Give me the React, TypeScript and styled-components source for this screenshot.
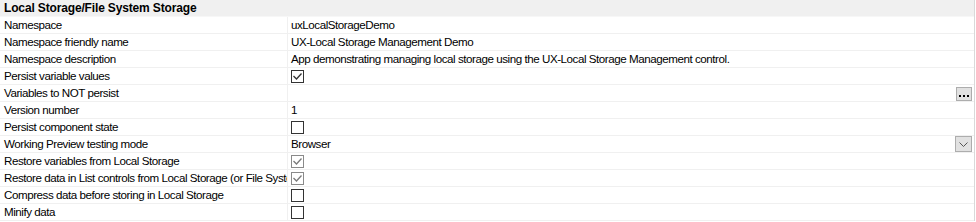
import React from 'react';
import styled, { createGlobalStyle } from 'styled-components';

type Kind = 'text' | 'check' | 'checkDim' | 'box' | 'ellipsis' | 'select';

interface Prop {
    label: string;
    kind: Kind;
    value?: string;
}

const props: Prop[] = [
    { label: 'Namespace', kind: 'text', value: 'uxLocalStorageDemo' },
    { label: 'Namespace friendly name', kind: 'text', value: 'UX-Local Storage Management Demo' },
    { label: 'Namespace description', kind: 'text', value: 'App demonstrating managing local storage using the UX-Local Storage Management control.' },
    { label: 'Persist variable values', kind: 'check' },
    { label: 'Variables to NOT persist', kind: 'ellipsis', value: '' },
    { label: 'Version number', kind: 'text', value: '1' },
    { label: 'Persist component state', kind: 'box' },
    { label: 'Working Preview testing mode', kind: 'select', value: 'Browser' },
    { label: 'Restore variables from Local Storage', kind: 'checkDim' },
    { label: 'Restore data in List controls from Local Storage (or File System Storage)', kind: 'checkDim' },
    { label: 'Compress data before storing in Local Storage', kind: 'box' },
    { label: 'Minify data', kind: 'box' },
];

export default function App() {
    return <>
        <GlobalStyle />
        <Grid>
            <Header>Local Storage/File System Storage</Header>
            {props.map(p => <Row key={p.label}>
                <Label>{p.label}</Label>
                <Value>{renderValue(p)}</Value>
            </Row>)}
        </Grid>
    </>;
}

function renderValue(p: Prop) {
    switch (p.kind) {
        case 'check':
            return <CheckBox><Tick dim={false} /></CheckBox>;
        case 'checkDim':
            return <CheckBox $dim><Tick dim /></CheckBox>;
        case 'box':
            return <CheckBox />;
        case 'ellipsis':
            return <>
                <Text>{p.value}</Text>
                <EditButton>
                    <svg width="11" height="3" viewBox="0 0 11 3">
                        <rect x="0" y="0" width="2" height="2" fill="#000" />
                        <rect x="4" y="0" width="2" height="2" fill="#000" />
                        <rect x="8" y="0" width="2" height="2" fill="#000" />
                    </svg>
                </EditButton>
            </>;
        case 'select':
            return <>
                <Text>{p.value}</Text>
                <DropButton>
                    <svg width="9" height="5" viewBox="0 0 9 5">
                        <path d="M0.5 0.5 L4.5 4.5 L8.5 0.5" fill="none" stroke="#555" strokeWidth="1" />
                    </svg>
                </DropButton>
            </>;
        default:
            return <Text>{p.value}</Text>;
    }
}

const Tick = ({ dim }: { dim: boolean }) =>
    <svg width="11" height="11" viewBox="0 0 11 11">
        <path d="M1.5 5 L4.5 8 L9.5 2.5" fill="none" stroke={dim ? '#7a7a7a' : '#333'} strokeWidth="1.3" />
    </svg>;

const GlobalStyle = createGlobalStyle`
    body {
        margin: 0;
        background: #fff;
        font-family: "Liberation Sans", Arial, sans-serif;
        font-size: 11.6px;
        letter-spacing: -0.45px;
        color: #000;
    }
`;

const Grid = styled.div`
    width: 975px;
    border-right: 1px solid #d9d9d9;
    box-sizing: border-box;
`;

const Header = styled.div`
    height: 16px;
    line-height: 16px;
    background: #f0f0f0;
    font-weight: bold;
    font-size: 12px;
    letter-spacing: -0.15px;
    padding-left: 4px;
    border-bottom: 1px solid #f7f7f7;
    white-space: nowrap;
`;

const Row = styled.div`
    display: grid;
    grid-template-columns: 288px 1fr;
    height: 16px;
    border-bottom: 1px solid #f0f0f0;
`;

const Label = styled.div`
    border-right: 1px solid #f0f0f0;
    padding-left: 4px;
    line-height: 16px;
    white-space: nowrap;
    overflow: hidden;
`;

const Value = styled.div`
    display: flex;
    align-items: center;
    padding-left: 3px;
    padding-right: 2px;
    min-width: 0;
`;

const Text = styled.span`
    flex: 1;
    line-height: 16px;
    white-space: nowrap;
`;

const CheckBox = styled.span<{ $dim?: boolean }>`
    width: 13px;
    height: 13px;
    box-sizing: border-box;
    border: 1px solid ${p => p.$dim ? '#8a8a8a' : '#333'};
    background: #fff;
    display: flex;
    align-items: center;
    justify-content: center;
`;

const EditButton = styled.span`
    width: 16px;
    height: 14px;
    box-sizing: border-box;
    border: 1px solid #adadad;
    background: #e1e1e1;
    display: flex;
    align-items: flex-end;
    justify-content: center;
    padding-bottom: 2px;
    margin-top: 2px;
`;

const DropButton = styled.span`
    width: 17px;
    height: 16px;
    box-sizing: border-box;
    border: 1px solid #adadad;
    background: #e1e1e1;
    display: flex;
    align-items: center;
    justify-content: center;
`;
